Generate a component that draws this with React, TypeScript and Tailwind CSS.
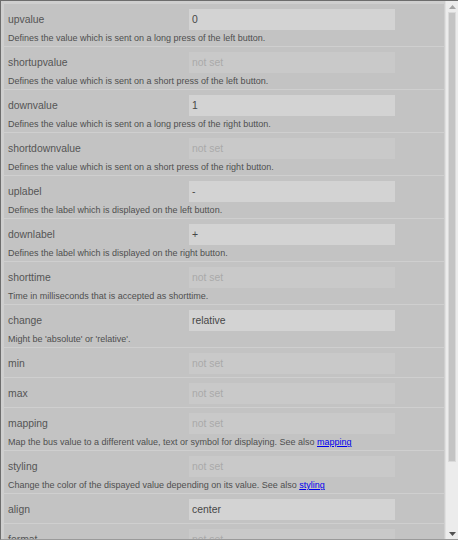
import React from "react";

type Prop = {
  name: string;
  value?: string;
  desc?: React.ReactNode;
};

const link = (label: string) => (
  <a href="#" className="text-[#0000ee] underline">
    {label}
  </a>
);

const props: Prop[] = [
  { name: "upvalue", value: "0", desc: "Defines the value which is sent on a long press of the left button." },
  { name: "shortupvalue", desc: "Defines the value which is sent on a short press of the left button." },
  { name: "downvalue", value: "1", desc: "Defines the value which is sent on a long press of the right button." },
  { name: "shortdownvalue", desc: "Defines the value which is sent on a short press of the right button." },
  { name: "uplabel", value: "-", desc: "Defines the label which is displayed on the left button." },
  { name: "downlabel", value: "+", desc: "Defines the label which is displayed on the right button." },
  { name: "shorttime", desc: "Time in milliseconds that is accepted as shorttime." },
  { name: "change", value: "relative", desc: "Might be 'absolute' or 'relative'." },
  { name: "min" },
  { name: "max" },
  {
    name: "mapping",
    desc: <>Map the bus value to a different value, text or symbol for displaying. See also {link("mapping")}</>,
  },
  {
    name: "styling",
    desc: <>Change the color of the dispayed value depending on its value. See also {link("styling")}</>,
  },
  { name: "align", value: "center" },
  { name: "format" },
];

function Row({ p }: { p: Prop }) {
  return (
    <div className={`bg-[#c3c3c3] pt-[5px] ${p.desc ? "pb-[2px]" : "pb-[3px]"}`}>
      <div className="flex items-center h-[21px]">
        <div className="w-[185px] pl-[4px] text-[10.4px] text-[#555]">{p.name}</div>
        <div
          className={`w-[206px] h-[21px] flex items-center pl-[3px] text-[10.4px] ${
            p.value ? "bg-[#d3d3d3] text-[#474747]" : "bg-[#c9c9c9] text-[#a9a9a9]"
          }`}
        >
          {p.value ?? "not set"}
        </div>
      </div>
      {p.desc && (
        <div className="mt-[3px] h-[11px] leading-[11px] pl-[4px] text-[9px] text-[#4f4f4f] whitespace-nowrap">
          {p.desc}
        </div>
      )}
    </div>
  );
}

export default function App() {
  return (
    <div
      className="w-[458px] h-[540px] overflow-hidden flex bg-[#cfcfcf] border-t border-l border-[#6d6d6d] border-b border-b-[#9a9a9a]"
      style={{ fontFamily: '"Liberation Sans", Arial, sans-serif' }}
    >
      <div className="flex-1 pt-[3px] pl-[3px] pr-[1px] flex flex-col gap-px overflow-hidden">
        {props.map((p) => (
          <Row key={p.name} p={p} />
        ))}
      </div>
      {/* fake scrollbar */}
      <div className="w-[13px] shrink-0 bg-[#ececec] border-l border-[#e0e0e0] flex flex-col items-center">
        <div className="h-[11px] flex items-center justify-center">
          <svg width="7" height="4" viewBox="0 0 7 4">
            <path d="M3.5 0 L7 4 L0 4 Z" fill="#a3a3a3" />
          </svg>
        </div>
        <div className="w-[8px] h-[450px] bg-[#c4c4c4] border border-[#dadada]" />
        <div className="flex-1" />
        <div className="h-[7px] flex items-start justify-center">
          <svg width="7" height="4" viewBox="0 0 7 4">
            <path d="M0 0 L7 0 L3.5 4 Z" fill="#505050" />
          </svg>
        </div>
      </div>
    </div>
  );
}
